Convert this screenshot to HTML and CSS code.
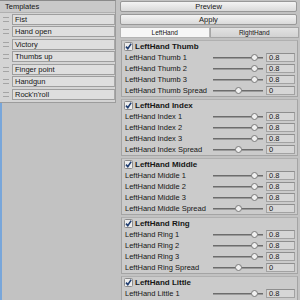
FILE: index.html
```html
<!DOCTYPE html>
<html lang="en">
<head>
    <meta charset="UTF-8">
    <meta name="viewport" content="width=device-width, initial-scale=1.0">
    <title>Hand Poser</title>
    <link rel="stylesheet" href="styles.css">
</head>
<body>
    <div class="window">
        <div class="side">
            <div class="templates">
                <div class="templates-head">Templates</div>
                <ul class="template-list">
                    <li><span class="handle"></span><span class="item">Fist</span></li>
                    <li><span class="handle"></span><span class="item">Hand open</span></li>
                    <li><span class="handle"></span><span class="item">Victory</span></li>
                    <li><span class="handle"></span><span class="item">Thumbs up</span></li>
                    <li><span class="handle"></span><span class="item">Finger point</span></li>
                    <li><span class="handle"></span><span class="item">Handgun</span></li>
                    <li><span class="handle"></span><span class="item">Rock'n'roll</span></li>
                </ul>
            </div>
            <div class="drop-area"></div>
        </div>
        <div class="inspector">
            <button class="btn">Preview</button>
            <button class="btn">Apply</button>
            <div class="tabs">
                <span class="tab active">LeftHand</span>
                <span class="tab">RightHand</span>
            </div>
            <div id="fingers"></div>
        </div>
    </div>
    <script>
        const fingers = [
            { name: "Thumb", values: [0.8, 0.8, 0.8, 0] },
            { name: "Index", values: [0.8, 0.8, 0.8, 0] },
            { name: "Middle", values: [0.8, 0.8, 0.8, 0] },
            { name: "Ring", values: [0.8, 0.8, 0.8, 0] },
            { name: "Little", values: [0.8, 0.8, 0.8, 0] }
        ];
        const check = '<svg class="check" width="9" height="9" viewBox="0 0 9 9"><rect x="0.5" y="0.5" width="8" height="8" rx="1" fill="#ececec" stroke="#8c8c8c"/><path d="M2 4.6 L3.8 6.6 L7.2 1.6" fill="none" stroke="#1f3d70" stroke-width="1.6"/></svg>';

        let html = "";
        fingers.forEach(function (f) {
            html += '<div class="group"><div class="group-head">' + check + '<span>LeftHand ' + f.name + '</span></div>';
            f.values.forEach(function (v, i) {
                let label = "LeftHand " + f.name + " " + (i < 3 ? i + 1 : "Spread");
                let knob = 25 + v * 21 - 3.5;
                html += '<div class="row"><span class="label">' + label + '</span>' +
                    '<span class="slider"><span class="track"></span><span class="knob" style="left:' + knob + 'px"></span></span>' +
                    '<span class="field">' + v + '</span></div>';
            });
            html += '</div>';
        });
        document.getElementById("fingers").innerHTML = html;
    </script>
</body>
</html>
```

FILE: styles.css
```css
* { box-sizing: border-box; }
html, body { margin: 0; padding: 0; }
body { width: 300px; height: 300px; overflow: hidden; background: #c2c2c2; font-family: "Liberation Sans", Arial, sans-serif; font-size: 7.5px; color: #161616; }
.window { display: flex; gap: 4px; height: 300px; }

.side { width: 116px; display: flex; flex-direction: column; }
.templates { background: #d4d4d4; border: 1px solid #9c9c9c; border-left: none; border-top-color: #8a8a8a; padding-bottom: 2px; }
.templates-head { height: 12px; line-height: 11px; padding-left: 5px; background: #c9c9c9; border-bottom: 1px solid #b0b0b0; }
.template-list { list-style: none; margin: 0; padding: 0; }
.template-list li { display: flex; align-items: center; height: 12px; }
.template-list li:nth-child(even) { height: 13px; }
.handle { width: 6px; height: 5px; margin: 0 3px 0 3px; border-top: 1px solid #a4a4a4; border-bottom: 1px solid #a4a4a4; }
.item { flex: 1; height: 11px; line-height: 9px; padding-left: 2px; background: #dedede; border: 1px solid #9e9e9e; border-right-color: #a8a8a8; }
.drop-area { flex: 1; border-left: 2px solid #78a6da; }

.inspector { flex: 1; display: flex; flex-direction: column; padding-top: 1px; }
.btn { height: 11px; margin: 0 3px 2px 0; padding: 0; font-family: inherit; font-size: 7.5px; color: #161616; background: linear-gradient(#f4f4f4, #d9d9d9); border: 1px solid #989898; border-radius: 2px; }
.tabs { display: flex; height: 11px; margin: 0 1px 2px 0; }
.tab { flex: 1; text-align: center; line-height: 9px; font-size: 6.5px; background: linear-gradient(#e2e2e2, #d2d2d2); border: 1px solid #a6a6a6; }
.tab.active { background: #f6f6f6; border-color: #b4b4b4; }

.group { height: 57px; margin: 0 2px 2px 1px; background: #cbcbcb; border: 1px solid #a4a4a4; border-top-color: #b0b0b0; }
.group-head { display: flex; align-items: center; height: 11px; padding-left: 2px; font-weight: bold; font-size: 8px; }
.check { margin-right: 2px; }
.row { display: flex; align-items: center; height: 11px; padding: 0 2px 0 3px; }
.label { flex: 1; white-space: nowrap; }
.slider { position: relative; width: 50px; height: 9px; margin-right: 3px; }
.track { position: absolute; left: 0; right: 0; top: 4px; height: 2px; background: #6c6c6c; border-bottom: 1px solid #9a9a9a; }
.knob { position: absolute; top: 1px; width: 7px; height: 7px; border-radius: 50%; background: #f0f0f0; border: 1px solid #7a7a7a; }
.field { width: 29px; height: 9px; line-height: 7px; padding-left: 2px; background: #d6d6d6; border: 1px solid #a2a2a2; border-top-color: #8e8e8e; }
```
